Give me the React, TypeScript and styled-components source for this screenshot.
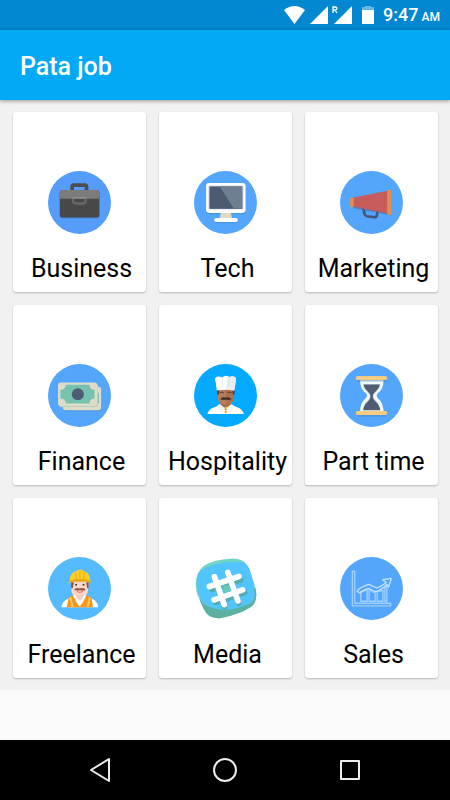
import React from "react";
import styled, { createGlobalStyle } from "styled-components";

const GlobalStyle = createGlobalStyle`
  * { box-sizing: border-box; }
  body {
    margin: 0;
    background: #fafafa;
    font-family: Roboto, "Noto Sans", sans-serif;
  }
`;

const Screen = styled.div`
  display: flex;
  flex-direction: column;
  min-height: 100vh;
`;

const StatusBar = styled.div`
  display: flex;
  align-items: center;
  justify-content: flex-end;
  height: 30px;
  padding-right: 10px;
  background: #0288d1;
  color: #fff;
`;

const StatusIcons = styled.svg`
  width: 94px;
  height: 30px;
  margin-right: 5px;
`;

const Clock = styled.time`
  display: flex;
  align-items: baseline;
  gap: 3px;
  font-size: 18px;
  font-weight: 500;
  line-height: 30px;
  padding-top: 2px;
`;

const Meridiem = styled.span`
  font-size: 12px;
`;

const AppBar = styled.header`
  display: flex;
  align-items: center;
  height: 70px;
  padding: 4px 20px 0;
  background: #03a9f4;
  box-shadow: 0 1px 4px rgba(0, 0, 0, 0.4);
  z-index: 1;
`;

const Title = styled.h1`
  margin: 0;
  color: #fff;
  font-size: 25px;
  font-weight: 500;
  line-height: 30px;
`;

const Categories = styled.main`
  display: grid;
  grid-template-columns: repeat(3, minmax(0, 1fr));
  gap: 13px;
  padding: 12px 12px 12px 13px;
  background: #f1f1f1;
`;

const Card = styled.button`
  display: flex;
  flex-direction: column;
  align-items: center;
  height: 180px;
  padding: 59px 0 0;
  border: 0;
  border-radius: 3px;
  background: #fff;
  box-shadow: 0 1px 2px rgba(0, 0, 0, 0.24);
  color: #000;
  font-family: inherit;
  cursor: pointer;
`;

const Picture = styled.svg`
  width: 63px;
  height: 63px;
  flex: none;
`;

const Label = styled.span`
  margin-top: 20px;
  padding-left: 4px;
  font-size: 25px;
  line-height: 30px;
  white-space: nowrap;
`;

const NavBar = styled.nav`
  display: flex;
  align-items: center;
  justify-content: center;
  gap: 65px;
  height: 60px;
  margin-top: auto;
  background: #000;
`;

const NavButton = styled.button`
  width: 60px;
  height: 60px;
  padding: 0;
  border: 0;
  background: none;
  color: #eee;
  cursor: pointer;
`;

const NavIcon = styled.svg`
  display: block;
  width: 60px;
  height: 60px;
  fill: none;
  stroke: currentColor;
  stroke-width: 2;
  stroke-linejoin: round;
`;

const Disc = ({ color }: { color: string }) => <circle cx="94" cy="94" r="94" fill={color} />;

const Briefcase = () => (
  <>
    <Disc color="#559cfb" />
    <path d="M72 60V47q0-5 5-5h33q5 0 5 5v13" fill="none" stroke="#4b4d50" strokeWidth="11" />
    <rect x="36" y="62" width="119" height="80" rx="7" fill="#376fae" opacity=".4" />
    <rect x="35" y="57" width="118" height="82" rx="7" fill="#484848" />
    <path d="M35 83V64q0-7 7-7h104q7 0 7 7v19z" fill="#7b7b7b" />
    <path d="M75 79v10q0 8 8 8h21q8 0 8-8V79" fill="none" stroke="#686868" strokeWidth="7" />
    <path d="M75 83v-3h37v3" fill="none" stroke="#8b8b8b" strokeWidth="6" />
  </>
);

const Computer = () => (
  <>
    <Disc color="#54a5fc" />
    <rect x="36" y="39" width="119" height="90" rx="9" fill="#4080bb" opacity=".45" />
    <rect x="60" y="142" width="71" height="14" rx="7" fill="#4080bb" opacity=".4" />
    <path d="M80 122h30l3 20H77z" fill="#e0dac4" />
    <rect x="36" y="36" width="118" height="89" rx="9" fill="#fff" />
    <rect x="43" y="43" width="104" height="72" rx="3" fill="#d4dce4" />
    <rect x="46" y="46" width="98" height="67" fill="#4c5b71" />
    <path d="M77 46h67v67h-25z" fill="#707e91" />
    <rect x="60" y="140" width="71" height="12" rx="6" fill="#fff" />
  </>
);

const Megaphone = () => (
  <>
    <Disc color="#54a5fc" />
    <path d="M70 110l3 18q1 6 7 7l23 3q6 0 7-6l3-16" fill="none" stroke="#445674" strokeWidth="8" />
    <path d="M39 111l113 22v-8L39 103z" fill="#5865a0" opacity=".6" />
    <path d="M37 80l105-21v68L37 105z" fill="#c65c5c" />
    <rect x="30" y="80" width="11" height="28" rx="4" fill="#dc9150" />
    <rect x="141" y="57" width="12" height="74" rx="3" fill="#dc9150" />
  </>
);

const Banknotes = () => (
  <>
    <Disc color="#54a5fc" />
    <rect x="46" y="73" width="115" height="68" rx="8" fill="#4277ab" opacity=".35" />
    <rect x="44" y="68" width="115" height="70" rx="9" fill="#dedcc9" />
    <path d="M56 126h88v-9h8V86h-9v35H56z" fill="#77bfae" />
    <rect x="31" y="58" width="118" height="70" rx="8" fill="#b7cfbf" />
    <rect x="30" y="55" width="117" height="70" rx="9" fill="#dedcc9" />
    <path d="M53 62h71q0 15 15 15v26q-15 0-15 15H53q0-15-16-15V77q16 0 16-15z" fill="#76c2af" />
    <circle cx="89" cy="90" r="18" fill="#4f5d73" />
  </>
);

const Chef = () => (
  <>
    <Disc color="#03aaff" />
    <path d="M40 149q4-14 18-19l20-8h33l20 8q13 5 18 19z" fill="#fff" />
    <path d="M77 108h35v13l-18 18-17-18z" fill="#9f6749" />
    <path d="M70 75h49v19q0 28-24 29-25-1-25-29z" fill="#b97b59" />
    <path d="M94 75h25v19q0 27-25 29z" fill="#ad704f" />
    <path d="M69 76h7l-2 15h-5zM114 76h7v15h-5z" fill="#513c35" />
    <path d="M68 79l-3-24q-9-17 9-18 7 0 10 3 9-10 22-1 7-4 13-1 9 4 5 17l-4 24q-25-5-52 0z" fill="#fff" />
    <path d="M97 39q2 19-1 37l24 3 4-24q5-17-5-18-7-1-13 2-4-3-9 0z" fill="#e9eeee" />
    <path d="M84 46l1 19M105 46l-2 19" stroke="#dce2e2" strokeWidth="3" />
    <path d="M77 86q6-4 12 0M100 86q6-4 12 0" fill="none" stroke="#5c3d33" strokeWidth="3" />
    <path d="M78 105q9-9 17-4 8-5 17 4-9 3-17 1-8 2-17-1z" fill="#392622" />
    <path d="M88 113h14" stroke="#c06f68" strokeWidth="3" />
    <path d="M77 119l17 14-12 15-14-22zM112 119l-18 14 14 15 13-22z" fill="#f2f4f2" />
    <circle cx="95" cy="131" r="4" fill="#eeb53e" />
    <circle cx="95" cy="143" r="4" fill="#eeb53e" />
  </>
);

const Hourglass = () => (
  <>
    <Disc color="#54a5fc" />
    <path d="M60 48h70q0 27-16 38-9 8 0 17 16 14 16 40H60q0-27 16-40 9-9 0-17-16-11-16-38z" fill="#f3fafc" />
    <path d="M68 60h53q-3 17-14 25-15 10 0 23 11 8 14 30H68q3-22 14-30 14-13 0-23-11-8-14-25z" fill="#d8dfe6" />
    <path d="M70 61h49q-2 13-12 20-9 6-9 16t8 15q12 10 14 26H69q2-16 14-26 8-6 8-15t-9-16Q72 74 70 61z" fill="#4f5d73" />
    <path d="M52 50h86M52 155h86" stroke="#4378a3" strokeWidth="4" opacity=".45" />
    <rect x="47" y="36" width="94" height="12" rx="6" fill="#f3cb83" />
    <rect x="47" y="140" width="94" height="12" rx="6" fill="#f3cb83" />
  </>
);

const Builder = () => (
  <>
    <Disc color="#56baff" />
    <path d="M40 150q3-18 17-24l20-9h36l21 9q13 6 16 24z" fill="#fff" />
    <path d="M77 105h36v15l-18 24-18-24z" fill="#eac1b8" />
    <path d="M69 74h51v20q-1 28-25 29-25-1-26-29z" fill="#f8d8cc" />
    <path d="M69 75h8l-3 18h-5zM114 75h7v18h-4z" fill="#955237" />
    <path d="M64 71q2-25 22-29 2-5 10-5t10 5q20 5 20 29l4 5q-35-6-70 0z" fill="#ffce25" />
    <path d="M65 70q30-10 60 0l5 6q-35-6-70 0z" fill="#eaa91a" />
    <path d="M82 50l4 17M109 50l-4 17M95 42v20" stroke="#ecb41e" strokeWidth="4" />
    <circle cx="84" cy="83" r="3" fill="#3b3535" />
    <circle cx="106" cy="83" r="3" fill="#3b3535" />
    <path d="M77 98q8-9 18-4 10-5 18 4-7 4-18 1-11 3-18-1z" fill="#955037" />
    <path d="M86 103q9 4 18 0" fill="none" stroke="#e76760" strokeWidth="3" />
    <path d="M62 120l15-6q5 21 17 33 14-12 19-33l17 7 4 29H56z" fill="#fa941c" />
    <path d="M75 116l19 32 20-32-5-3-15 9-15-9z" fill="#fff" />
    <path d="M80 112h29l-7 12-7 7-8-7z" fill="#f3cdc2" />
    <path d="M66 120l7 30M125 120l-7 30" stroke="#ffcf4f" strokeWidth="6" />
  </>
);

const Hashtag = () => (
  <>
    <path d="M31 25Q62 7 108 5q38-3 50 20 15 27 25 67 10 43-15 58-32 21-87 32-38 5-53-29Q7 108 5 81q0-37 26-56z" fill="#71d5c4" />
    <path d="M5 81q2 49 36 65 63 26 142-54 10 43-15 58-32 21-87 32-38 5-53-29Q7 108 5 81z" fill="#5ab1a0" />
    <path d="M9 62q4-23 28-31 60-23 113-14 14 9 19 30 9 30 13 67-4 22-21 28-58 22-91 13-40-5-56-41Q6 86 9 62z" fill="#52c4ff" />
    <g fill="none" strokeLinecap="round" strokeWidth="17">
      <path d="M63 66l28 83M103 52l30 86M53 97l86-29M65 135l86-29" stroke="#53aeb0" />
      <path d="M61 59l29 83M101 46l30 85M46 88l88-30M60 128l85-30" stroke="#fff" />
    </g>
    <path d="M84 88l18-6 8 20-19 6z" fill="#6bc7b7" />
  </>
);

const Growth = () => (
  <>
    <Disc color="#54a5fc" />
    <g fill="none" stroke="#a0d0ff" strokeWidth="4" strokeLinejoin="round">
      <path d="M37 42h7v96h107v8H37z" />
      <path d="M62 132v-26l7-4 12-4v34zM87 132V98l8 5 10 4v25zM111 132v-27l17-6v33zM134 132V93l6-7v46z" />
      <path d="M51 103q4-11 35-21l23 10q12-2 29-16l-11-8 26-4-8 26-5-8q-21 21-36 21L87 94q-12 2-29 13z" stroke="#bfe1ff" />
    </g>
  </>
);

const categories = [
  { name: "Business", Art: Briefcase },
  { name: "Tech", Art: Computer },
  { name: "Marketing", Art: Megaphone },
  { name: "Finance", Art: Banknotes },
  { name: "Hospitality", Art: Chef },
  { name: "Part time", Art: Hourglass },
  { name: "Freelance", Art: Builder },
  { name: "Media", Art: Hashtag },
  { name: "Sales", Art: Growth },
];

export default function App() {
  return (
    <Screen>
      <GlobalStyle />
      <StatusBar>
        <StatusIcons viewBox="0 0 94 30" fill="#fff" aria-hidden="true">
          <path d="M0 10Q10.500 2 21 10L10.500 24z" />
          <path d="M26 24L44 6v18zM50 24L68 6v18z" />
          <path d="M49 13V7h2q2 0 2 1.500T51 10h-2m2 0l2 3" fill="none" stroke="#fff" strokeWidth="1.300" />
          <path d="M78 10h12v14H78z" />
          <path d="M81 6h6v1h3v3H78V7h3z" opacity=".4" />
        </StatusIcons>
        <Clock dateTime="09:47">
          <span>9:47</span>
          <Meridiem>AM</Meridiem>
        </Clock>
      </StatusBar>
      <AppBar>
        <Title>Pata job</Title>
      </AppBar>
      <Categories>
        {categories.map(({ name, Art }) => (
          <Card key={name} type="button">
            <Picture viewBox="0 0 188 188" aria-hidden="true">
              <Art />
            </Picture>
            <Label>{name}</Label>
          </Card>
        ))}
      </Categories>
      <NavBar>
        <NavButton type="button" aria-label="Back">
          <NavIcon viewBox="0 0 60 60">
            <path d="M39 19v22L21 30z" />
          </NavIcon>
        </NavButton>
        <NavButton type="button" aria-label="Home">
          <NavIcon viewBox="0 0 60 60">
            <circle cx="30" cy="30" r="11" />
          </NavIcon>
        </NavButton>
        <NavButton type="button" aria-label="Recent apps">
          <NavIcon viewBox="0 0 60 60">
            <rect x="21" y="21" width="18" height="18" />
          </NavIcon>
        </NavButton>
      </NavBar>
    </Screen>
  );
}
